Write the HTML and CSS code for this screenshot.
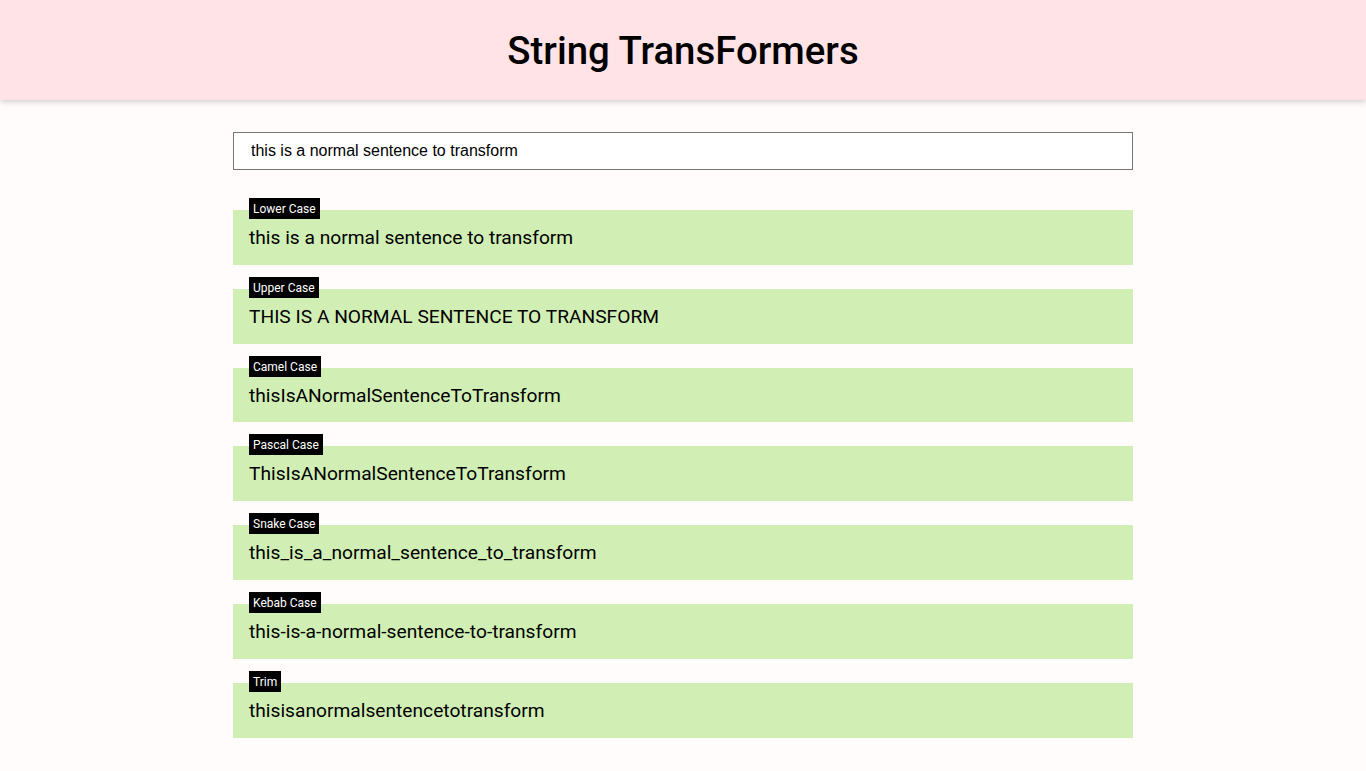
FILE: index.html
```html
<!DOCTYPE html>
<html lang="en">
<head>
<meta charset="utf-8">
<title>String TransFormers</title>
<link rel="stylesheet" href="styles.css">
</head>
<body>
<header class="header">
  <h1 class="title">String TransFormers</h1>
</header>
<main class="main">
  <input class="input" type="text" value="this is a normal sentence to transform">
  <div class="list">
    <div class="item"><span class="label">Lower Case</span><div class="value">this is a normal sentence to transform</div></div>
    <div class="item"><span class="label">Upper Case</span><div class="value">THIS IS A NORMAL SENTENCE TO TRANSFORM</div></div>
    <div class="item"><span class="label">Camel Case</span><div class="value">thisIsANormalSentenceToTransform</div></div>
    <div class="item"><span class="label">Pascal Case</span><div class="value">ThisIsANormalSentenceToTransform</div></div>
    <div class="item"><span class="label">Snake Case</span><div class="value">this_is_a_normal_sentence_to_transform</div></div>
    <div class="item"><span class="label">Kebab Case</span><div class="value">this-is-a-normal-sentence-to-transform</div></div>
    <div class="item"><span class="label">Trim</span><div class="value">thisisanormalsentencetotransform</div></div>
  </div>
</main>
</body>
</html>
```
FILE: styles.css
```css
html, body {
  margin: 0;
  padding: 0;
}
body {
  background: #fffcfb;
  font-family: Roboto, "Liberation Sans", sans-serif;
  color: #000;
}
.header {
  height: 100px;
  background: #ffe3e6;
  box-shadow: 0 2px 6px rgba(0, 0, 0, 0.18);
  display: flex;
  align-items: center;
  justify-content: center;
}
.title {
  margin: 0;
  font-size: 38.4px;
  font-weight: 500;
}
.main {
  width: 900px;
  margin: 32px auto 0;
  display: flex;
  flex-direction: column;
}
.input {
  box-sizing: border-box;
  width: 900px;
  height: 38px;
  border: 1px solid #767676;
  border-radius: 0;
  padding: 0 17px;
  font-family: "Liberation Sans", Arial, sans-serif;
  font-size: 16px;
  background: #fff;
  color: #000;
  outline: none;
}
.list {
  margin-top: 40px;
  display: flex;
  flex-direction: column;
  gap: 24px;
}
.item {
  position: relative;
  background: #d1efb5;
  padding: 17px 16px 16px;
}
.label {
  position: absolute;
  top: -12px;
  left: 16px;
  background: #000;
  color: #fff;
  font-size: 12px;
  line-height: 14px;
  padding: 4px 4px 3px;
}
.value {
  font-size: 19.2px;
  line-height: 21.83px;
}
```
